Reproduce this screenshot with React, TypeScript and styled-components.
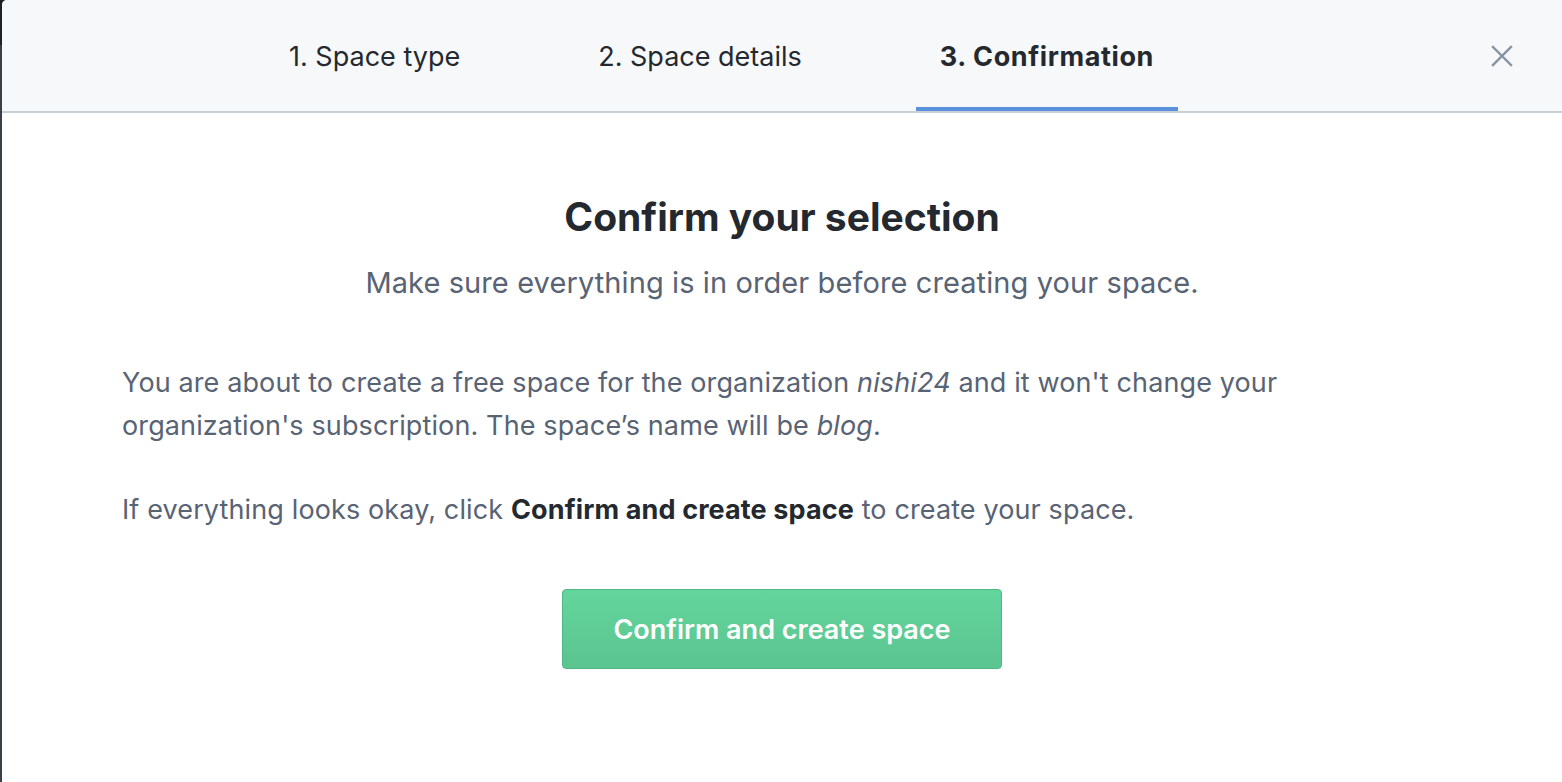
import React from 'react';
import styled, { createGlobalStyle } from 'styled-components';

const GlobalStyle = createGlobalStyle`
  html, body {
    margin: 0;
    padding: 0;
    height: 100%;
  }
  body {
    background: linear-gradient(to bottom, #1c2228 0, #1c2228 45px, #3a4047 45px);
    font-family: Inter, "Noto Sans", "Liberation Sans", sans-serif;
    overflow: hidden;
  }
  #root {
    height: 100%;
  }
`;

const Modal = styled.div`
  margin-left: 2px;
  height: 782px;
  background: #ffffff;
  border-top-left-radius: 5px;
  overflow: hidden;
  display: flex;
  flex-direction: column;
`;

const Header = styled.header`
  height: 113px;
  background: #f7f8fa;
  border-bottom: 2px solid #c8d0d8;
  display: flex;
  align-items: stretch;
  position: relative;
  box-sizing: border-box;
  flex-shrink: 0;
`;

const Tabs = styled.nav`
  display: flex;
  gap: 90px;
  padding-left: 263px;
`;

const Tab = styled.div<{ active?: boolean }>`
  display: flex;
  align-items: center;
  padding: 0 24px;
  height: 111px;
  box-sizing: border-box;
  font-size: 27px;
  line-height: 1;
  font-weight: ${({ active }) => (active ? 700 : 400)};
  letter-spacing: ${({ active }) => (active ? '0.6px' : '0')};
  color: #24292f;
  border-bottom: 4px solid ${({ active }) => (active ? '#5a90dc' : 'transparent')};

  & > span {
    margin-top: 5px;
  }
`;

const CloseButton = styled.button`
  position: absolute;
  right: 39px;
  top: 35px;
  width: 42px;
  height: 42px;
  border: none;
  background: transparent;
  padding: 0;
  display: flex;
  align-items: center;
  justify-content: center;
  cursor: pointer;
`;

const Body = styled.main`
  padding: 82px 120px 0;
  display: flex;
  flex-direction: column;
`;

const Title = styled.h1`
  margin: 0;
  text-align: center;
  font-size: 39px;
  line-height: 44px;
  font-weight: 700;
  color: #24292f;
`;

const Subtitle = styled.p`
  margin: 26px 0 0;
  text-align: center;
  font-size: 29px;
  line-height: 36px;
  letter-spacing: 0.1px;
  color: #586374;
`;

const Paragraph = styled.p<{ gap: number }>`
  margin: ${({ gap }) => gap}px 0 0;
  font-size: 27px;
  line-height: 43px;
  letter-spacing: 0.12px;
  color: #586374;
  max-width: 1170px;

  em {
    font-style: italic;
  }
  strong {
    font-weight: 700;
    color: #24292f;
  }
`;

const Actions = styled.div`
  display: flex;
  justify-content: center;
  margin-top: 58px;
`;

const ConfirmButton = styled.button`
  width: 440px;
  height: 80px;
  box-sizing: border-box;
  border: 1px solid #4fb985;
  border-radius: 4px;
  background: linear-gradient(to bottom, #63d59c, #5bc490);
  color: #ffffff;
  font-family: inherit;
  font-size: 27px;
  font-weight: 600;
  cursor: pointer;
`;

export default function App() {
  return (
    <>
      <GlobalStyle />
      <Modal>
        <Header>
          <Tabs>
            <Tab><span>1. Space type</span></Tab>
            <Tab><span>2. Space details</span></Tab>
            <Tab active><span>3. Confirmation</span></Tab>
          </Tabs>
          <CloseButton aria-label="Close">
            <svg width="22" height="22" viewBox="0 0 22 22">
              <path d="M2 2 L20 20 M20 2 L2 20" stroke="#8593a5" strokeWidth="2.4" strokeLinecap="square" />
            </svg>
          </CloseButton>
        </Header>
        <Body>
          <Title>Confirm your selection</Title>
          <Subtitle>Make sure everything is in order before creating your space.</Subtitle>
          <Paragraph gap={60}>
            You are about to create a free space for the organization <em>nishi24</em> and it won't change your
            organization's subscription. The space’s name will be <em>blog</em>.
          </Paragraph>
          <Paragraph gap={41}>
            If everything looks okay, click <strong>Confirm and create space</strong> to create your space.
          </Paragraph>
          <Actions>
            <ConfirmButton>Confirm and create space</ConfirmButton>
          </Actions>
        </Body>
      </Modal>
    </>
  );
}
